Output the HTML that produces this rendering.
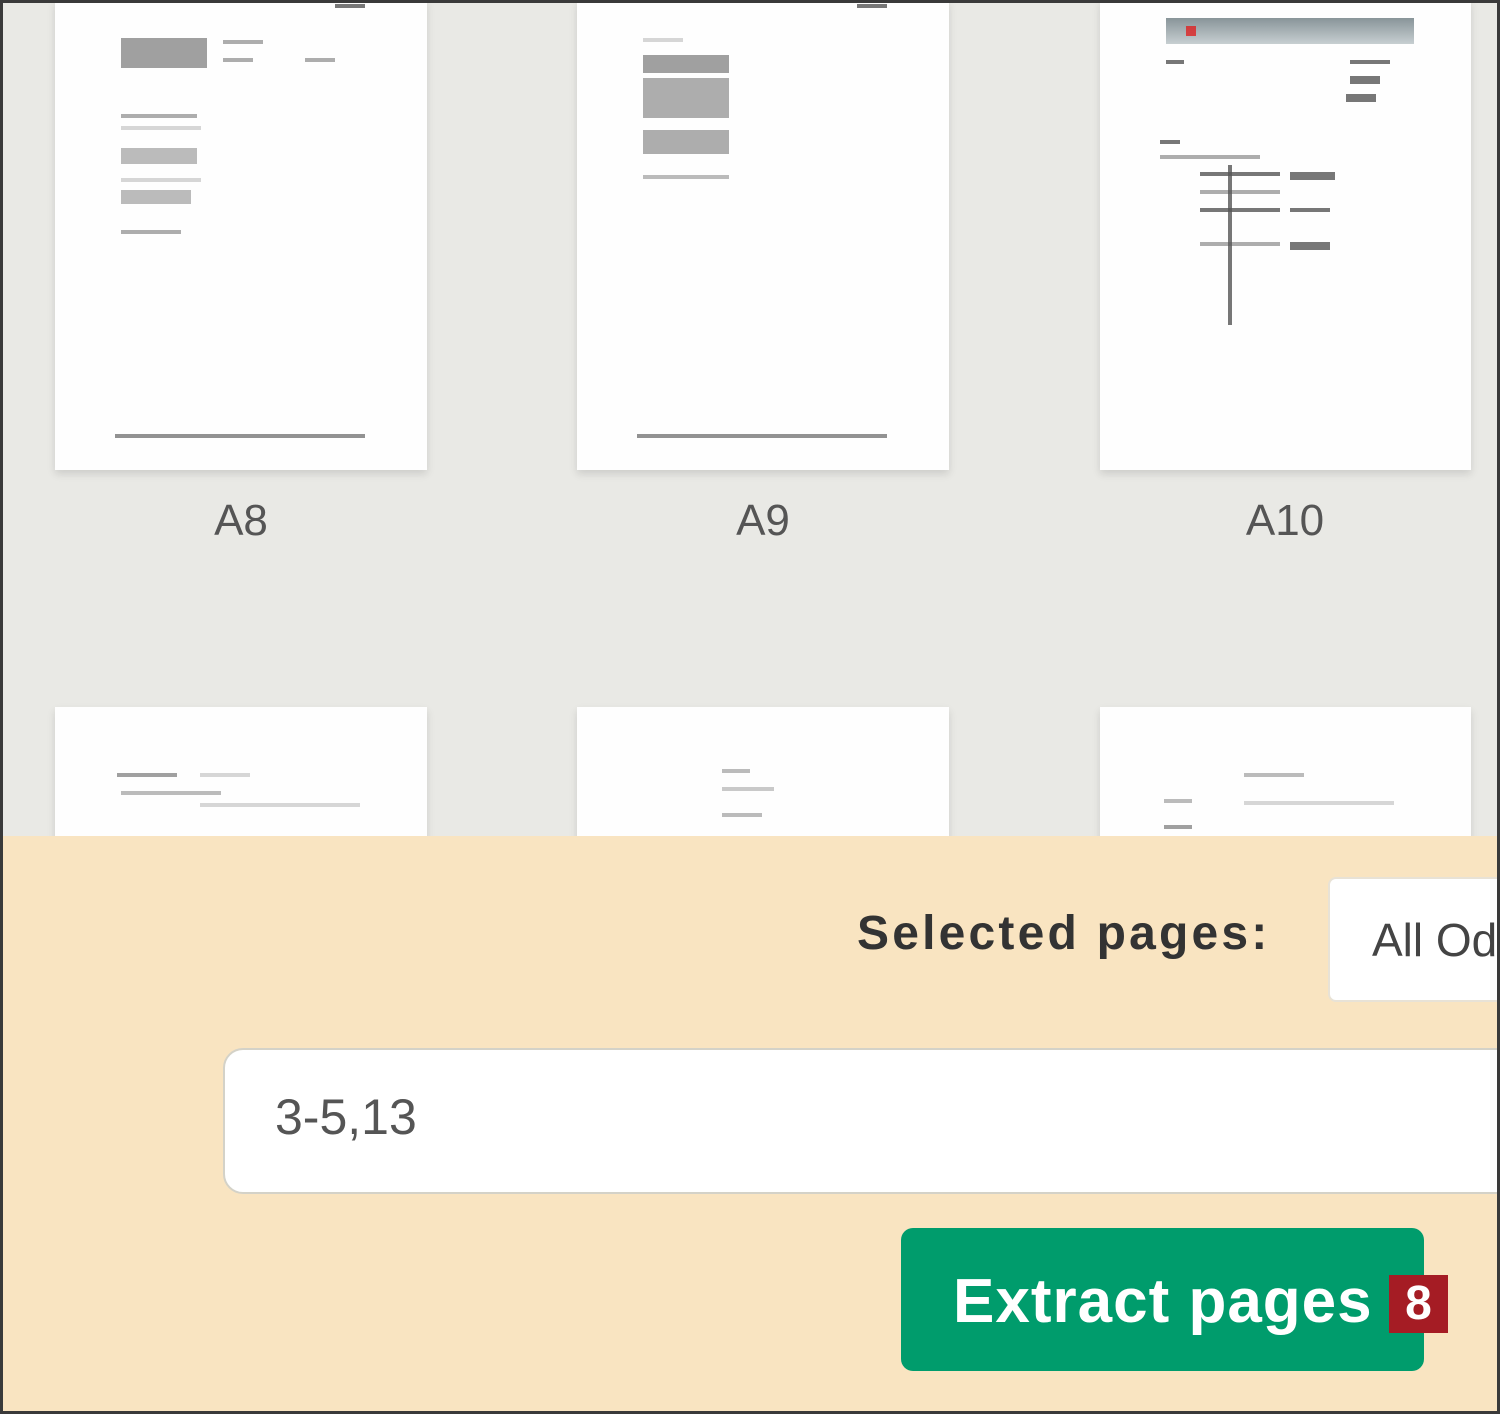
<!DOCTYPE html>
<html><head><meta charset="utf-8"><style>
*{margin:0;padding:0;box-sizing:border-box}
html,body{width:1500px;height:1414px;overflow:hidden}
body{background:#e9e9e5;position:relative;font-family:"Liberation Sans",sans-serif}
.frame{position:absolute;inset:0;border:3px solid #3a3a3a;z-index:50;pointer-events:none}
.pg{position:absolute;background:#fefefe;box-shadow:0 4px 8px rgba(0,0,0,.12)}
.b{position:absolute;background:#999;height:4px;opacity:.8}
.d{background:#555}
.l{background:#ccc}
.lbl{position:absolute;top:496px;font-size:44px;color:#555;width:120px;text-align:center}
.panel{position:absolute;left:0;top:836px;width:1500px;height:578px;background:#f9e4c1}
.sel{position:absolute;left:857px;top:906px;font-size:48px;font-weight:bold;color:#333;letter-spacing:3.2px}
.box{position:absolute;left:1328px;top:877px;width:190px;height:125px;background:#fff;border:2px solid #e8e2d6;border-radius:8px;font-size:46px;color:#444;padding:34px 0 0 42px}
.inp{position:absolute;left:223px;top:1048px;width:1300px;height:146px;background:#fff;border:2px solid #d4d2c8;border-radius:20px;font-size:50px;color:#555;padding:38px 0 0 50px}
.btn{position:absolute;left:901px;top:1228px;width:523px;height:143px;background:#009c6c;border-radius:12px;color:#fff;font-size:62px;font-weight:bold;padding:38px 0 0 52px;letter-spacing:1px}
.badge{position:absolute;left:1389px;top:1275px;width:59px;height:58px;background:#a51c24;color:#fff;font-size:48px;font-weight:bold;text-align:center;line-height:58px}
</style></head><body>
<div class="frame"></div>

<div class="pg" style="left:55px;top:0;width:372px;height:470px">
<div class="b d" style="left:66px;top:38px;width:86px;height:30px;background:#888"></div>
<div class="b" style="left:168px;top:40px;width:40px"></div>
<div class="b" style="left:168px;top:58px;width:30px"></div>
<div class="b" style="left:250px;top:58px;width:30px"></div>
<div class="b" style="left:66px;top:114px;width:76px"></div>
<div class="b l" style="left:66px;top:126px;width:80px"></div>
<div class="b" style="left:66px;top:148px;width:76px;height:16px;background:#aaa"></div>
<div class="b l" style="left:66px;top:178px;width:80px"></div>
<div class="b" style="left:66px;top:190px;width:70px;height:14px;background:#aaa"></div>
<div class="b" style="left:66px;top:230px;width:60px"></div>
<div class="b" style="left:60px;top:434px;width:250px;background:#777"></div>
<div class="b d" style="left:280px;top:4px;width:30px"></div>
</div>
<div class="pg" style="left:577px;top:0;width:372px;height:470px">
<div class="b l" style="left:66px;top:38px;width:40px"></div>
<div class="b" style="left:66px;top:55px;width:86px;height:18px;background:#888"></div>
<div class="b" style="left:66px;top:78px;width:86px;height:40px;background:#999"></div>
<div class="b" style="left:66px;top:130px;width:86px;height:24px;background:#999"></div>
<div class="b" style="left:66px;top:175px;width:86px;background:#aaa"></div>
<div class="b" style="left:60px;top:434px;width:250px;background:#777"></div>
<div class="b d" style="left:280px;top:4px;width:30px"></div>
</div>
<div class="pg" style="left:1100px;top:0;width:371px;height:470px">
<div class="b" style="left:66px;top:18px;width:248px;height:26px;background:linear-gradient(#6b7a80,#b9c3c6)"></div>
<div class="b" style="left:86px;top:26px;width:10px;height:10px;background:#d22"></div>
<div class="b d" style="left:66px;top:60px;width:18px"></div>
<div class="b d" style="left:250px;top:60px;width:40px"></div>
<div class="b d" style="left:250px;top:76px;width:30px;height:8px"></div>
<div class="b d" style="left:246px;top:94px;width:30px;height:8px"></div>
<div class="b d" style="left:60px;top:140px;width:20px"></div>
<div class="b" style="left:60px;top:155px;width:100px"></div>
<div class="b d" style="left:100px;top:172px;width:80px"></div>
<div class="b d" style="left:190px;top:172px;width:45px;height:8px"></div>
<div class="b" style="left:100px;top:190px;width:80px"></div>
<div class="b d" style="left:100px;top:208px;width:80px"></div>
<div class="b d" style="left:190px;top:208px;width:40px"></div>
<div class="b" style="left:100px;top:242px;width:80px"></div>
<div class="b d" style="left:190px;top:242px;width:40px;height:8px"></div>
<div class="b" style="left:128px;top:165px;width:4px;height:160px;background:#555"></div>
</div>

<div class="lbl" style="left:181px">A8</div>
<div class="lbl" style="left:703px">A9</div>
<div class="lbl" style="left:1225px">A10</div>

<div class="pg" style="left:55px;top:707px;width:372px;height:140px">
<div class="b" style="left:62px;top:66px;width:60px;background:#888"></div>
<div class="b l" style="left:145px;top:66px;width:50px"></div>
<div class="b" style="left:66px;top:84px;width:100px;background:#aaa"></div>
<div class="b l" style="left:145px;top:96px;width:160px"></div>
</div>
<div class="pg" style="left:577px;top:707px;width:372px;height:140px">
<div class="b" style="left:145px;top:62px;width:28px;background:#aaa"></div>
<div class="b" style="left:145px;top:80px;width:52px;background:#bbb"></div>
<div class="b" style="left:145px;top:106px;width:40px;background:#aaa"></div>
</div>
<div class="pg" style="left:1100px;top:707px;width:371px;height:140px">
<div class="b" style="left:144px;top:66px;width:60px;background:#aaa"></div>
<div class="b" style="left:64px;top:92px;width:28px;background:#aaa"></div>
<div class="b l" style="left:144px;top:94px;width:150px"></div>
<div class="b" style="left:64px;top:118px;width:28px;background:#888"></div>
</div>

<div class="panel"></div>
<div class="sel">Selected pages:</div>
<div class="box">All Od</div>
<div class="inp">3-5,13</div>
<div class="btn">Extract pages</div>
<div class="badge">8</div>
</body></html>
